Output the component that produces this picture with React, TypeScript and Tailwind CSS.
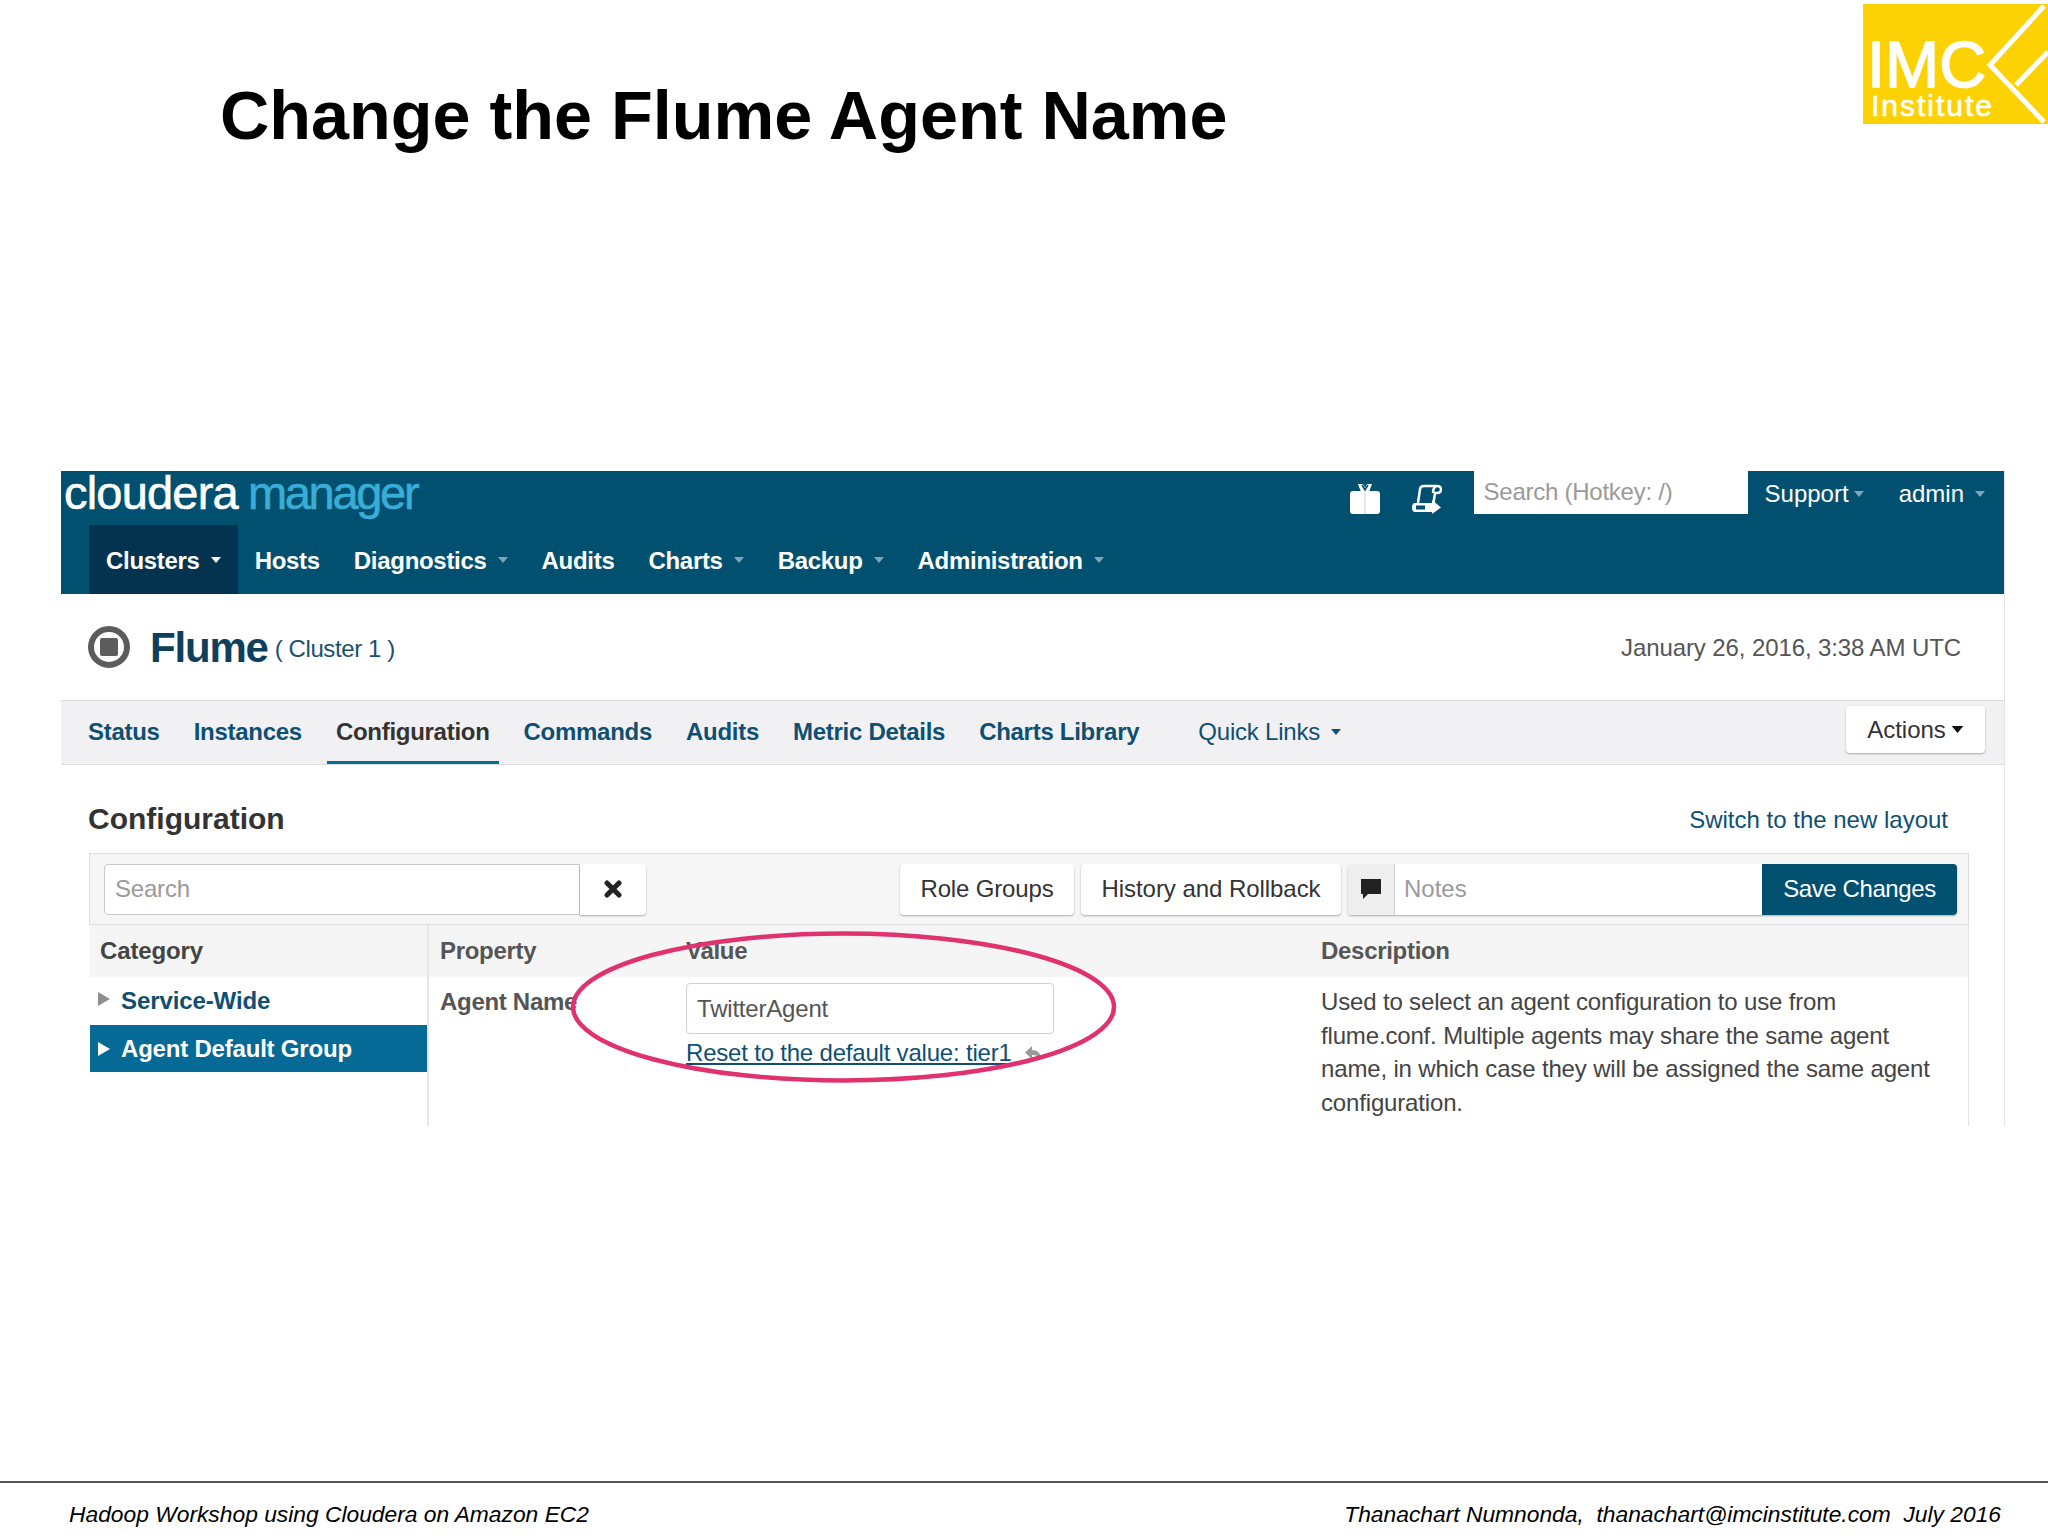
const sans = "font-['Liberation_Sans',Arial,sans-serif]";

function Caret({ className }: { className: string }) {
  return (
    <svg width="10" height="6" viewBox="0 0 10 6" className={className}>
      <path d="M0 0h10L5 6z" fill="currentColor" />
    </svg>
  );
}

function ImcLogo() {
  return (
    <svg width="185" height="120" viewBox="0 0 185 120" className="block">
      <rect width="185" height="120" fill="#fdd205" />
      <text x="4" y="83" fill="#fff" stroke="#fff" strokeWidth="1.5" fontSize="65" fontFamily="Liberation Sans, sans-serif">IMC</text>
      <text x="8" y="112" fill="#fff" stroke="#fff" strokeWidth="0.6" fontSize="30" letterSpacing="2" fontFamily="Liberation Sans, sans-serif">Institute</text>
      <path d="M181 2 L127 61 L181 118" fill="none" stroke="#fff" strokeWidth="5" />
      <path d="M153 81 L185 48" fill="none" stroke="#fff" strokeWidth="5" />
    </svg>
  );
}

function GiftIcon() {
  return (
    <svg width="30" height="30" viewBox="0 0 30 30">
      <path d="M8 0h5l2 4 2-4h5l-3 8h-8z" fill="#fff" />
      <path d="M12 1l3 5 3-5" fill="none" stroke="#02506f" strokeWidth="1.500" />
      <rect x="0" y="7" width="30" height="23" rx="3" fill="#fff" />
      <rect x="14.500" y="7" width="1" height="23" fill="#c5d3da" />
    </svg>
  );
}

function ScrollIcon() {
  return (
    <svg width="30" height="31" viewBox="0 0 30 31" fill="none" stroke="#fff" strokeWidth="2.500">
      <path d="M6 19 L8 5 Q8.500 2 12 2 H25 Q29 2 29 5.500 Q29 9 25 9 H23 L21.500 19" />
      <path d="M24 2 Q21 4 21 9" />
      <path d="M3 19 H20 V16 L29 23.500 L20 30 V28 H3 Q0 28 0 23.500 Q0 19 3 19 Z" fill="#fff" stroke="none" />
      <rect x="4" y="21.500" width="9" height="4" fill="#02506f" stroke="none" />
    </svg>
  );
}

function NavItem({ label, caret, active }: { label: string; caret?: boolean; active?: boolean }) {
  return (
    <div className={`flex items-center gap-[11px] h-full px-[17px] ${active ? 'bg-[#03334f]' : ''}`}>
      <span className="mt-[3px]">{label}</span>
      {caret && <Caret className={`mt-[1px] ${active ? 'text-white' : 'text-[#7fa5b8]'}`} />}
    </div>
  );
}

function TopBar() {
  return (
    <header className="bg-[#02506f] h-[123px] flex flex-col text-white">
      <div className="flex h-[54px]">
        <div className="pl-[3px] text-[47px] leading-[44px] tracking-[-0.8px] [-webkit-text-stroke:0.6px_currentColor]">
          <span className="text-white">cloudera</span>
          <span className="text-[#38aed6] ml-[10px] tracking-[-2.3px]">manager</span>
        </div>
        <div className="ml-auto flex items-start text-[24px] leading-[43px]">
          <div className="flex items-center gap-[32px] h-[56px] mr-[32px]">
            <GiftIcon />
            <ScrollIcon />
          </div>
          <div className="w-[274px] h-[43px] bg-white text-[#9a9a9a] pl-[10px] leading-[41px] tracking-[-0.25px]">Search (Hotkey: /)</div>
          <div className="flex items-center gap-[5px] ml-[17px] h-[45px]">
            Support
            <Caret className="text-[#7fa5b8]" />
          </div>
          <div className="flex items-center gap-[11px] ml-[35px] mr-[19px] h-[45px]">
            admin
            <Caret className="text-[#7fa5b8]" />
          </div>
        </div>
      </div>
      <nav className="flex-1 flex items-center pl-[28px] text-[24px] font-bold tracking-[-0.3px]">
        <NavItem label="Clusters" caret active />
        <NavItem label="Hosts" />
        <NavItem label="Diagnostics" caret />
        <NavItem label="Audits" />
        <NavItem label="Charts" caret />
        <NavItem label="Backup" caret />
        <NavItem label="Administration" caret />
      </nav>
    </header>
  );
}

function StatusRow() {
  return (
    <div className="h-[106px] flex items-center pl-[27px] pr-[43px]">
      <div className="w-[42px] h-[42px] rounded-full border-[6px] border-[#5c5c5c] flex items-center justify-center">
        <div className="w-[18px] h-[18px] rounded-[2px] bg-[#5c5c5c]" />
      </div>
      <h1 className="ml-[20px] text-[42px] font-bold tracking-[-1.2px] text-[#0f3f5c]">Flume</h1>
      <span className="ml-[7px] mt-[4px] text-[24px] tracking-[-0.4px] text-[#1c506e]">( Cluster 1 )</span>
      <span className="ml-auto mt-[1px] text-[24px] tracking-[-0.1px] text-[#555]">January 26, 2016, 3:38 AM UTC</span>
    </div>
  );
}

function Tabs() {
  const tabs = ['Status', 'Instances', 'Configuration', 'Commands', 'Audits', 'Metric Details', 'Charts Library'];
  return (
    <div className="h-[65px] bg-[#f1f1f3] border-y border-[#dcdcdc] flex items-stretch pl-[18px] pr-[19px] text-[24px]">
      <div className="flex gap-[16px] font-bold tracking-[-0.28px] text-[#0f4f72]">
        {tabs.map((t) => (
          <div
            key={t}
            className={`flex items-center px-[9px] pt-[2px] border-b-[3px] ${t === 'Configuration' ? 'text-[#333] border-[#0d6a8f]' : 'border-transparent'}`}
          >
            {t}
          </div>
        ))}
      </div>
      <div className="flex items-center gap-[11px] ml-[50px] pb-[1px] tracking-[-0.2px] text-[#0f4f72]">
        Quick Links
        <Caret className="text-[#0f4f72]" />
      </div>
      <div className="ml-auto mt-[5px] h-[47px] w-[139px] bg-white rounded-[4px] shadow-[0_1px_2px_rgba(0,0,0,0.3)] flex items-center justify-center gap-[5px] text-[#333]">
        Actions
        <Caret className="text-[#111] w-[13px] h-[7px]" />
      </div>
    </div>
  );
}

function Toolbar() {
  const btn = 'h-[51px] bg-white rounded-[4px] shadow-[0_1px_2px_rgba(0,0,0,0.3)] flex items-center justify-center text-[#333]';
  return (
    <div className="h-[72px] bg-[#f6f6f6] border-y border-[#dedede] border-x flex items-center pl-[14px] pr-[11px] text-[24px]">
      <div className="w-[476px] h-[51px] bg-white border border-[#c9c9c9] rounded-l-[4px] flex items-center pl-[10px] text-[#9a9a9a] tracking-[-0.2px]">Search</div>
      <div className={`${btn} w-[66px] rounded-l-none`}>
        <svg width="18" height="18" viewBox="0 0 18 18" stroke="#222" strokeWidth="5" strokeLinecap="round">
          <path d="M3 3l12 12M15 3L3 15" />
        </svg>
      </div>
      <div className={`${btn} w-[174px] ml-[254px] tracking-[-0.15px]`}>Role Groups</div>
      <div className={`${btn} w-[260px] ml-[7px] tracking-[-0.05px]`}>History and Rollback</div>
      <div className="flex h-[51px] ml-[7px] rounded-[4px] shadow-[0_1px_2px_rgba(0,0,0,0.3)] flex-1 overflow-hidden">
        <div className="w-[47px] bg-[#eeeeee] border-r border-[#cfcfcf] flex items-center justify-center">
          <svg width="20" height="22" viewBox="0 0 20 22" fill="#222">
            <path d="M0 1h20v15H7l-5 5v-5H0z" />
          </svg>
        </div>
        <div className="flex-1 bg-white pl-[9px] flex items-center text-[#9a9a9a]">Notes</div>
        <div className="w-[195px] bg-[#02506f] text-white flex items-center justify-center tracking-[-0.4px]">Save Changes</div>
      </div>
    </div>
  );
}

function ConfigTable() {
  return (
    <div className="flex ml-[1px] h-[201px] border-r border-[#e3e3e3] text-[24px]">
      <div className="w-[337px] shrink-0">
        <div className="h-[52px] bg-[#f5f5f5] flex items-center pl-[10px] font-bold text-[#444] tracking-[-0.15px]">Category</div>
        <div className="h-[48px] flex items-center pl-[8px] font-bold text-[#0f4f72] tracking-[-0.1px]">
          <svg width="12" height="14" viewBox="0 0 12 14" className="mb-[4px]"><path d="M0 0l12 7-12 7z" fill="#8f8f8f" /></svg>
          <span className="ml-[11px]">Service-Wide</span>
        </div>
        <div className="h-[47px] bg-[#056a95] flex items-center pl-[8px] font-bold text-white tracking-[-0.2px]">
          <svg width="12" height="14" viewBox="0 0 12 14"><path d="M0 0l12 7-12 7z" fill="#fff" /></svg>
          <span className="ml-[11px]">Agent Default Group</span>
        </div>
      </div>
      <div className="flex-1 border-l-2 border-[#e6e6e6]">
        <div className="h-[52px] bg-[#f5f5f5] flex items-center font-bold text-[#555] tracking-[-0.3px]">
          <span className="w-[257px] pl-[11px]">Property</span>
          <span className="w-[635px]">Value</span>
          <span>Description</span>
        </div>
        <div className="flex">
          <div className="w-[257px] pl-[11px] pt-[8px] font-bold text-[#555] tracking-[-0.3px] leading-[34px]">Agent Name</div>
          <div className="w-[635px] pt-[6px]">
            <div className="w-[368px] h-[51px] border border-[#cfcfcf] rounded-[4px] bg-white flex items-center pl-[10px] text-[#555] tracking-[-0.2px]">TwitterAgent</div>
            <div className="flex items-center gap-[13px] mt-[1px] text-[#0f4f72] tracking-[-0.2px]">
              <span className="underline">Reset to the default value: tier1</span>
              <svg width="16" height="14" viewBox="0 0 16 14" fill="#9a9a9a"><path d="M7 0v4c5 0 9 3 9 9-2-3-5-4-9-4v4L0 6.500z" /></svg>
            </div>
          </div>
          <p className="w-[620px] pt-[8px] leading-[33.500px] text-[#444] tracking-[-0.16px]">
            Used to select an agent configuration to use from flume.conf. Multiple agents may share the same agent name, in which case they will be assigned the same agent configuration.
          </p>
        </div>
      </div>
    </div>
  );
}

export default function App() {
  return (
    <div className={`relative w-[2048px] h-[1536px] bg-white overflow-hidden flex flex-col ${sans}`}>
      <div className="h-[471px] flex items-start shrink-0">
        <h1 className="ml-[220px] mt-[73px] text-[68.350px] leading-[84px] font-bold text-black">Change the Flume Agent Name</h1>
        <div className="ml-auto mt-[4px]"><ImcLogo /></div>
      </div>

      <div className="relative ml-[61px] w-[1944px] h-[655px] border-r border-[#e4e4e4]">
        <TopBar />
        <StatusRow />
        <Tabs />
        <div className="pl-[28px] pr-[35px]">
          <div className="h-[88px] pt-[18px] flex items-center justify-between pr-[21px]">
            <h2 className="text-[30px] font-bold text-[#333] ml-[-1px]">Configuration</h2>
            <a className="text-[24px] text-[#0f4f72] mt-[3px]">Switch to the new layout</a>
          </div>
          <Toolbar />
          <ConfigTable />
        </div>
        <svg width="560" height="165" viewBox="0 0 560 165" className="absolute left-[503px] top-[455px] pointer-events-none" fill="none">
          <ellipse cx="279.500" cy="81" rx="270.500" ry="73.500" stroke="#e0326f" strokeWidth="4.500" />
        </svg>
      </div>

      <footer className="mt-auto h-[55px] border-t-2 border-[#555] flex items-center justify-between pt-[10px] pl-[69px] pr-[47px] text-[22.800px] italic text-black">
        <span>Hadoop Workshop using Cloudera on Amazon EC2</span>
        <span className="whitespace-pre">Thanachart Numnonda,  thanachart@imcinstitute.com  July 2016</span>
      </footer>
    </div>
  );
}
